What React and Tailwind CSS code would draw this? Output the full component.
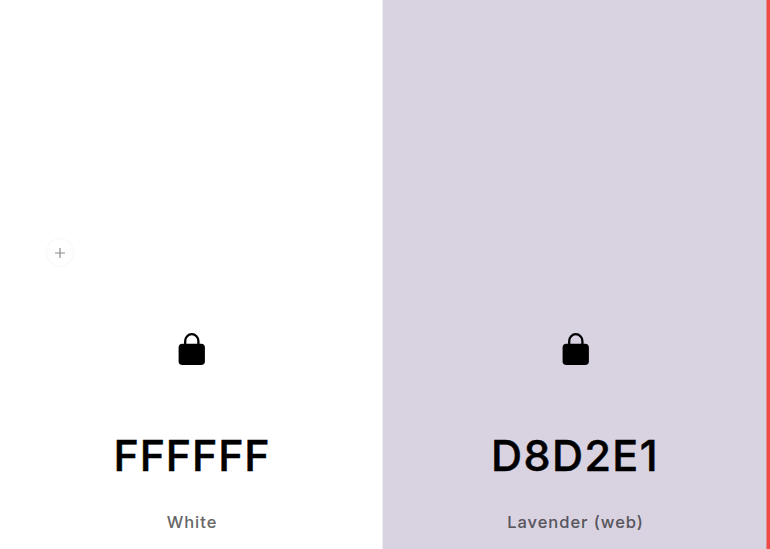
function Lock() {
  return (
    <svg className="mt-[333px] ml-px h-8 w-[27px] shrink-0" viewBox="0 0 27 32" fill="none">
      <path d="M7.2 12V8a6.6 6.8 0 0 1 13.2 0V12" stroke="black" strokeWidth="2.3" />
      <rect x="0.6" y="10.8" width="26.3" height="21.2" rx="3.8" fill="black" />
    </svg>
  );
}

function Swatch({ hex, name, className, hexClassName }) {
  return (
    <section className={`flex h-full shrink-0 flex-col items-center whitespace-nowrap ${className}`}>
      <Lock />
      <h2 className={`mt-[62px] text-[43px] leading-[56px] font-medium text-black [-webkit-text-stroke:0.5px_black] ${hexClassName}`}>{hex}</h2>
      <p className="mt-[27px] ml-[2px] text-[16.5px] leading-6 font-medium tracking-[0.96px] text-black/60 [-webkit-text-stroke:0.15px]">{name}</p>
    </section>
  );
}

export default function App() {
  return (
    <main className="relative flex h-[549px] w-[770px] overflow-hidden bg-white font-['Inter',sans-serif]">
      <Swatch hex="FFFFFF" name="White" className="w-[383px] border-r border-[#eeecf1] bg-white" hexClassName="ml-[2px] tracking-[0.8px]" />
      <Swatch hex="D8D2E1" name="Lavender (web)" className="w-[383px] bg-[#d8d2e1]" hexClassName="ml-px tracking-[1.4px]" />
      <div className="h-full w-1 border-l border-[#e28d93] bg-[#ee4b47]" />
      <button className="absolute top-[238px] left-[46px] flex h-[29px] w-7 items-center justify-center rounded-full border border-[#f7f7f7]">
        <svg className="h-2.5 w-2.5" viewBox="0 0 10 10" stroke="#8c8c8c" strokeWidth="1.2"><path d="M5 0v10M0 5h10" /></svg>
      </button>
    </main>
  );
}
